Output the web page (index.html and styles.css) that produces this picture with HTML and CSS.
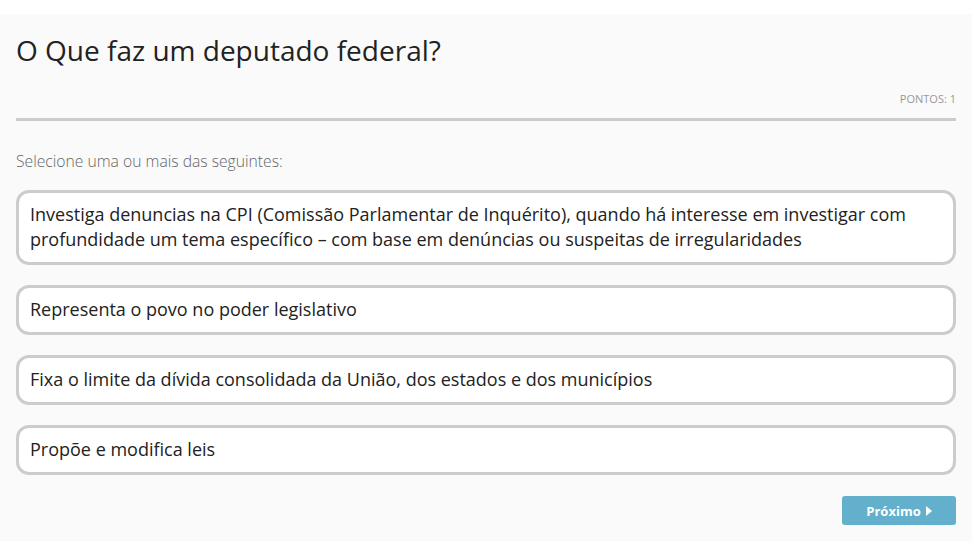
FILE: index.html
```html
<!DOCTYPE html>
<html lang="pt">
<head>
<meta charset="utf-8">
<title>Quiz</title>
<link rel="stylesheet" href="styles.css">
</head>
<body>
<div class="panel">
  <h1 class="title">O Que faz um deputado federal?</h1>
  <div class="points">PONTOS: 1</div>
  <p class="instructions">Selecione uma ou mais das seguintes:</p>
  <ul class="options">
    <li class="option">Investiga denuncias na CPI (Comissão Parlamentar de Inquérito), quando há interesse em investigar com profundidade um tema específico – com base em denúncias ou suspeitas de irregularidades</li>
    <li class="option">Representa o povo no poder legislativo</li>
    <li class="option">Fixa o limite da dívida consolidada da União, dos estados e dos municípios</li>
    <li class="option">Propõe e modifica leis</li>
  </ul>
  <div class="actions">
    <button class="next">Próximo <svg class="caret" width="6" height="10" viewBox="0 0 6 10"><path d="M0 0 L6 5 L0 10 Z" fill="#fff"/></svg></button>
  </div>
</div>
</body>
</html>
```

FILE: styles.css
```css
html, body {
  margin: 0;
  padding: 0;
  background: #ffffff;
}
body {
  font-family: "Open Sans", "Liberation Sans", sans-serif;
}
.panel {
  margin-top: 14px;
  background: #fafafa;
  padding: 17px 16px 20px 16px;
  min-height: 527px;
  box-sizing: border-box;
}
.title {
  margin: 0;
  font-size: 28px;
  font-weight: 400;
  line-height: 38px;
  color: #222222;
}
.points {
  margin-top: 22px;
  text-align: right;
  font-size: 11px;
  line-height: 16px;
  color: #999999;
  padding-bottom: 11px;
  border-bottom: 3px solid #cccccc;
}
.instructions {
  margin: 29px 0 0 0;
  font-size: 15.7px;
  font-weight: 300;
  line-height: 22px;
  color: #666666;
}
.options {
  list-style: none;
  margin: 18px 0 0 0;
  padding: 0;
  display: flex;
  flex-direction: column;
  gap: 20px;
}
.option {
  border: 3px solid #cccccc;
  border-radius: 13px;
  background: #ffffff;
  padding: 9px 11px 10px 11px;
  font-size: 18px;
  line-height: 25px;
  color: #222222;
}
.actions {
  display: flex;
  justify-content: flex-end;
  margin-top: 21px;
}
.next {
  width: 114px;
  height: 29px;
  border: none;
  border-radius: 3px;
  background: #62b0cb;
  color: #ffffff;
  font-family: "Open Sans", "Liberation Sans", sans-serif;
  font-weight: 700;
  font-size: 13px;
  display: flex;
  align-items: center;
  justify-content: center;
  gap: 5px;
  padding: 0;
}
.caret {
  display: block;
}
```
